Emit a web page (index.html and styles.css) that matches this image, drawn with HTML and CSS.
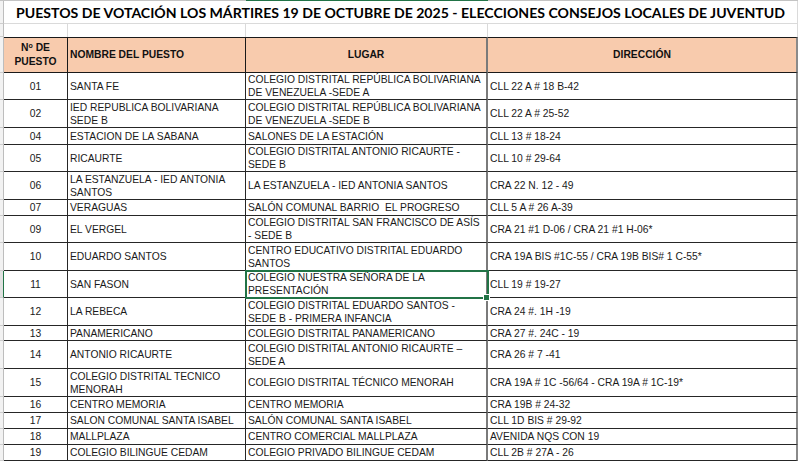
FILE: index.html
```html
<!DOCTYPE html>
<html lang="es">
<head>
<meta charset="utf-8">
<title>Puestos de votación Los Mártires</title>
<link rel="stylesheet" href="styles.css">
</head>
<body>
<table class="sheet">
  <colgroup>
    <col class="c-rh"><col class="c-a"><col class="c-b"><col class="c-c"><col class="c-d">
  </colgroup>
  <tr class="colhdr"><td></td><td></td><td></td><td class="hl"></td><td></td></tr>
  <tr class="title"><td class="rh"></td><td colspan="4" class="ttl">PUESTOS DE VOTACIÓN LOS MÁRTIRES 19 DE OCTUBRE DE 2025 - ELECCIONES CONSEJOS LOCALES DE JUVENTUD</td></tr>
  <tr class="blank"><td class="rh"></td><td class="g"></td><td class="g"></td><td class="g"></td><td class="g"></td></tr>
  <tr class="head">
    <td class="rh"></td>
    <th class="a">N<sup>o</sup> DE<br>PUESTO</th>
    <th class="b">NOMBRE DEL PUESTO</th>
    <th class="c ctr">LUGAR</th>
    <th class="d ctr">DIRECCIÓN</th>
  </tr>
  <tr class="r27"><td class="rh"></td><td class="a">01</td><td class="b">SANTA FE</td><td class="c">COLEGIO DISTRITAL REPÚBLICA BOLIVARIANA<br>DE VENEZUELA -SEDE A</td><td class="d">CLL 22 A # 18 B-42</td></tr>
  <tr class="r28"><td class="rh"></td><td class="a">02</td><td class="b">IED REPUBLICA BOLIVARIANA<br>SEDE B</td><td class="c">COLEGIO DISTRITAL REPÚBLICA BOLIVARIANA<br>DE VENEZUELA -SEDE B</td><td class="d">CLL 22 A # 25-52</td></tr>
  <tr class="r17"><td class="rh"></td><td class="a">04</td><td class="b">ESTACION DE LA SABANA</td><td class="c">SALONES DE LA ESTACIÓN</td><td class="d">CLL 13 # 18-24</td></tr>
  <tr class="r27"><td class="rh"></td><td class="a">05</td><td class="b">RICAURTE</td><td class="c">COLEGIO DISTRITAL ANTONIO RICAURTE -<br>SEDE B</td><td class="d">CLL 10 # 29-64</td></tr>
  <tr class="r28"><td class="rh"></td><td class="a">06</td><td class="b">LA ESTANZUELA - IED ANTONIA<br>SANTOS</td><td class="c">LA ESTANZUELA - IED ANTONIA SANTOS</td><td class="d">CRA 22 N. 12 - 49</td></tr>
  <tr class="r16"><td class="rh"></td><td class="a">07</td><td class="b">VERAGUAS</td><td class="c">SALÓN COMUNAL BARRIO &nbsp;EL PROGRESO</td><td class="d">CLL 5 A # 26 A-39</td></tr>
  <tr class="r27"><td class="rh"></td><td class="a">09</td><td class="b">EL VERGEL</td><td class="c">COLEGIO DISTRITAL SAN FRANCISCO DE ASÍS<br>- SEDE B</td><td class="d">CRA 21 #1 D-06 / CRA 21 #1 H-06*</td></tr>
  <tr class="r28"><td class="rh"></td><td class="a">10</td><td class="b">EDUARDO SANTOS</td><td class="c">CENTRO EDUCATIVO DISTRITAL EDUARDO<br>SANTOS</td><td class="d">CRA 19A BIS #1C-55 / CRA 19B BIS# 1 C-55*</td></tr>
  <tr class="r27"><td class="rh sel-rh"></td><td class="a">11</td><td class="b">SAN FASON</td><td class="c sel">COLEGIO NUESTRA SEÑORA DE LA<br>PRESENTACIÓN</td><td class="d">CLL 19 # 19-27</td></tr>
  <tr class="r28"><td class="rh"></td><td class="a">12</td><td class="b">LA REBECA</td><td class="c">COLEGIO DISTRITAL EDUARDO SANTOS -<br>SEDE B - PRIMERA INFANCIA</td><td class="d">CRA 24 #. 1H -19</td></tr>
  <tr class="r15"><td class="rh"></td><td class="a">13</td><td class="b">PANAMERICANO</td><td class="c">COLEGIO DISTRITAL PANAMERICANO</td><td class="d">CRA 27 #. 24C - 19</td></tr>
  <tr class="r28"><td class="rh"></td><td class="a">14</td><td class="b">ANTONIO RICAURTE</td><td class="c">COLEGIO DISTRITAL ANTONIO RICAURTE –<br>SEDE A</td><td class="d">CRA 26 # 7 -41</td></tr>
  <tr class="r28"><td class="rh"></td><td class="a">15</td><td class="b">COLEGIO DISTRITAL TECNICO<br>MENORAH</td><td class="c">COLEGIO DISTRITAL TÉCNICO MENORAH</td><td class="d">CRA 19A # 1C -56/64 - CRA 19A # 1C-19*</td></tr>
  <tr class="r16"><td class="rh"></td><td class="a">16</td><td class="b">CENTRO MEMORIA</td><td class="c">CENTRO MEMORIA</td><td class="d">CRA 19B # 24-32</td></tr>
  <tr class="r16"><td class="rh"></td><td class="a">17</td><td class="b">SALON COMUNAL SANTA ISABEL</td><td class="c">SALÓN COMUNAL SANTA ISABEL</td><td class="d">CLL 1D BIS # 29-92</td></tr>
  <tr class="r16"><td class="rh"></td><td class="a">18</td><td class="b">MALLPLAZA</td><td class="c">CENTRO COMERCIAL MALLPLAZA</td><td class="d">AVENIDA NQS CON 19</td></tr>
  <tr class="r16"><td class="rh"></td><td class="a">19</td><td class="b">COLEGIO BILINGUE CEDAM</td><td class="c">COLEGIO PRIVADO BILINGUE CEDAM</td><td class="d">CLL 2B # 27A - 26</td></tr>
</table>
</body>
</html>
```
FILE: styles.css
```css
html, body {
  margin: 0;
  padding: 0;
  background: #ffffff;
}
body {
  width: 800px;
  height: 462px;
  overflow: hidden;
  font-family: "Liberation Sans", Arial, sans-serif;
  color: #1a1a1a;
}
.sheet {
  border-collapse: separate;
  border-spacing: 0;
  table-layout: fixed;
  width: 798px;
}
.c-rh { width: 4px; }
.c-a { width: 64px; }
.c-b { width: 178px; }
.c-c { width: 242px; }
.c-d { width: 310px; }

.sheet td, .sheet th {
  box-sizing: border-box;
  padding: 0 2px;
  font-size: 10.3px;
  line-height: 13px;
  white-space: nowrap;
  overflow: hidden;
  vertical-align: middle;
  text-align: left;
  font-weight: normal;
}

/* column-header bottom edge */
.colhdr td {
  height: 1px;
  padding: 0;
  background: #c4c4c4;
}
.colhdr td.hl { background: #217346; }

/* row-header sliver */
.sheet td.rh {
  padding: 0;
  background: #f2f2f2;
  border-right: 1px solid #bdbdbd;
  border-bottom: 1px solid #cdcdcd;
}
.sheet td.sel-rh {
  border-right: 1px solid #217346;
  background: #e1e1e1;
}

/* title row */
.title { height: 23px; }
.sheet td.ttl {
  font-family: Lato, "Open Sans", sans-serif;
  font-weight: 700;
  font-size: 14.1px;
  letter-spacing: 0;
  line-height: 20px;
  color: #000;
  text-align: center;
  border-bottom: 1px solid #dadada;
  border-right: 1px solid #dadada;
  padding: 2px 0 0;
  overflow: visible;
}

/* blank row */
.blank { height: 13px; }
.sheet td.g { border-right: 1px solid #dadada; }

/* header row */
.head { height: 36px; }
.head th {
  background: #f8cbad;
  font-weight: 700;
  color: #111;
  line-height: 14px;
  border-top: 1px solid #1a1a1a;
  border-bottom: 1px solid #1a1a1a;
  border-right: 1px solid #1a1a1a;
}
.head th.a { text-align: center; }
.head th.ctr { text-align: center; }
.head sup {
  font-size: 7px;
  vertical-align: top;
  line-height: 9px;
}

/* data rows */
.r15 { height: 15px; }
.r16 { height: 16px; }
.r17 { height: 17px; }
.r27 { height: 27px; }
.r28 { height: 28px; }

.sheet tr td.a,
.sheet tr td.b,
.sheet tr td.c,
.sheet tr td.d {
  border-bottom: 1px solid #262626;
  border-right: 1px solid #262626;
}
.sheet td.a { text-align: center; }
.sheet .head th.c,
.sheet tr td.c { border-right: 2px solid #7a7a7a; }
.sheet .head th.d,
.sheet tr td.d { border-right: 2px solid #8a8a8a; }

/* selected cell */
.sheet td.sel {
  position: relative;
  overflow: visible;
  outline: 2px solid #217346;
  outline-offset: -1px;
}
.sheet td.sel::after {
  content: "";
  position: absolute;
  right: -4px;
  bottom: -4px;
  width: 5px;
  height: 5px;
  background: #217346;
  border: 1px solid #ffffff;
  z-index: 2;
}
```
